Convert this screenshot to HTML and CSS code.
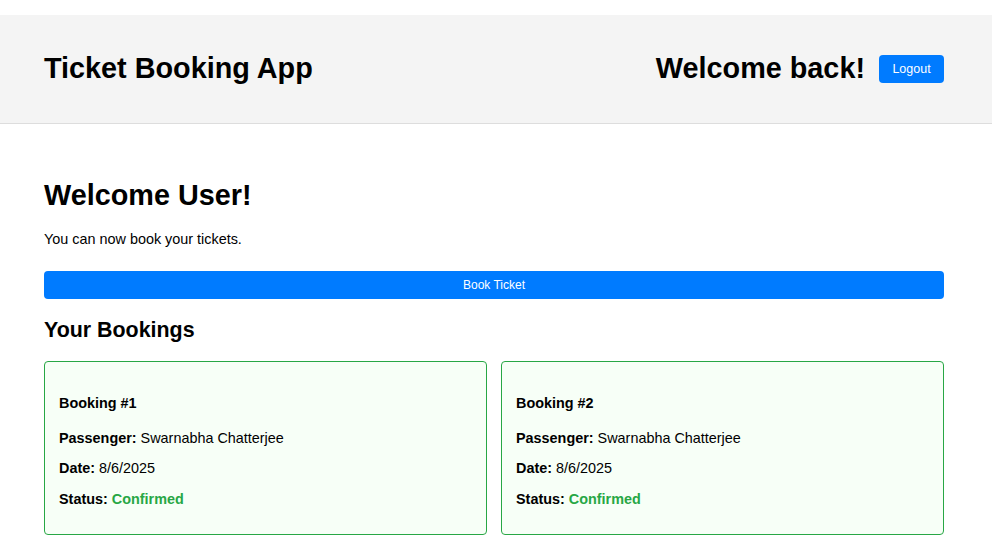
FILE: index.html
```html
<!DOCTYPE html>
<html>
<head>
<meta charset="utf-8">
<link rel="stylesheet" href="styles.css">
</head>
<body>
<div class="page">
  <header class="header">
    <h1 class="brand">Ticket Booking App</h1>
    <div class="header-right">
      <h2 class="greet">Welcome back!</h2>
      <button class="btn btn-logout">Logout</button>
    </div>
  </header>
  <main class="main">
    <h1 class="title">Welcome User!</h1>
    <p class="lead">You can now book your tickets.</p>
    <button class="btn btn-block">Book Ticket</button>
    <h2 class="section">Your Bookings</h2>
    <div class="bookings">
      <div class="card">
        <h4 class="card-title">Booking #1</h4>
        <p class="row"><strong>Passenger:</strong> Swarnabha Chatterjee</p>
        <p class="row"><strong>Date:</strong> 8/6/2025</p>
        <p class="row last"><strong>Status:</strong> <span class="ok">Confirmed</span></p>
      </div>
      <div class="card">
        <h4 class="card-title">Booking #2</h4>
        <p class="row"><strong>Passenger:</strong> Swarnabha Chatterjee</p>
        <p class="row"><strong>Date:</strong> 8/6/2025</p>
        <p class="row last"><strong>Status:</strong> <span class="ok">Confirmed</span></p>
      </div>
    </div>
  </main>
</div>
</body>
</html>
```

FILE: styles.css
```css
* { box-sizing: border-box; }
html, body { margin: 0; padding: 0; background: #fff; }
body {
  font-family: "Liberation Sans", Arial, sans-serif;
  color: #000;
}
.page { padding-top: 15px; }
.header {
  background: #f4f4f4;
  border-bottom: 1px solid #ddd;
  height: 109px;
  padding: 0 48px 0 44px;
  display: flex;
  align-items: center;
  justify-content: space-between;
}
.brand, .greet {
  margin: 0 0 2px;
  font-size: 28.8px;
  font-weight: 700;
  line-height: 33px;
}
.header-right {
  display: flex;
  align-items: center;
  gap: 14px;
}
.btn {
  background: #007bff;
  color: #fff;
  border: none;
  border-radius: 4px;
  font-family: "Liberation Sans", Arial, sans-serif;
  font-size: 12px;
  height: 28px;
  cursor: pointer;
}
.btn-logout {
  width: 65px;
  padding: 0;
  font-size: 12.5px;
}
.main {
  padding: 0 48px 0 44px;
}
.title {
  margin: 55px 0 0;
  font-size: 28.8px;
  line-height: 33px;
  font-weight: 700;
}
.lead {
  margin: 19px 0 0;
  font-size: 14.4px;
  line-height: 17px;
}
.btn-block {
  display: block;
  width: 100%;
  margin-top: 23px;
}
.section {
  margin: 19px 0 0;
  font-size: 21.4px;
  line-height: 25px;
  font-weight: 700;
}
.bookings {
  margin-top: 18px;
  display: grid;
  grid-template-columns: 1fr 1fr;
  gap: 14px;
}
.card {
  border: 1px solid #28a745;
  border-radius: 4px;
  background: #f7fff7;
  padding: 14px;
  height: 174px;
}
.card-title {
  margin: 18px 0 0;
  font-size: 14.4px;
  line-height: 18px;
  font-weight: 700;
}
.row {
  margin: 12px 0 0;
  font-size: 14.4px;
  line-height: 18px;
}
.card-title + .row { margin-top: 17px; }
.row.last { margin-top: 13px; }
.ok {
  color: #28a745;
  font-weight: 700;
}
```
